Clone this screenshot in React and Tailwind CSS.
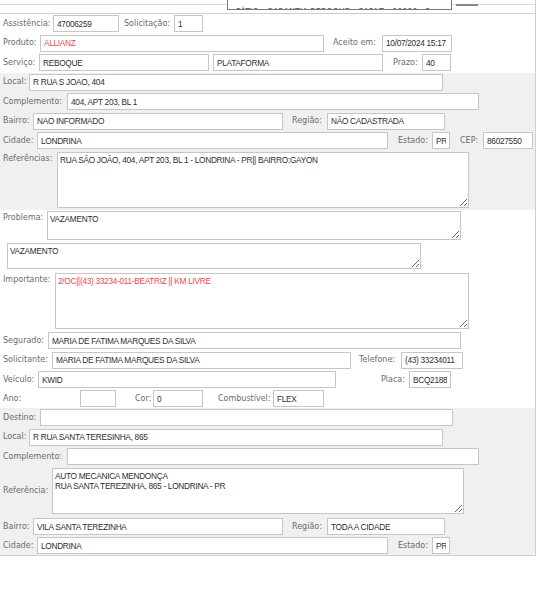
import React from 'react';

const Lbl = ({ children, w = '', cls = '' }) => (
    <span className={`shrink-0 whitespace-nowrap text-[8px] leading-[12px] text-[#6b6b6b] font-['DejaVu_Sans',sans-serif] ${w} ${cls}`}>
        {children}
    </span>
);

const Inp = ({ value = '', w = '', red, cls = '' }) => (
    <input
        readOnly
        value={value}
        className={`shrink-0 h-[17px] border border-[#c6c6c6] bg-white px-[3px] text-[8.3px] tracking-[-0.3px] font-['Liberation_Sans',sans-serif] outline-none ${red ? 'text-[#f2464e]' : 'text-[#2e2e36]'} ${w} ${cls}`}
    />
);

const Area = ({ value = '', w = '', h = '', red, cls = '' }) => (
    <textarea
        readOnly
        value={value}
        className={`shrink-0 border border-[#c6c6c6] bg-white px-[2px] py-[2px] text-[8.3px] leading-[10px] tracking-[-0.3px] font-['Liberation_Sans',sans-serif] outline-none overflow-hidden ${red ? 'text-[#f2464e]' : 'text-[#2e2e36]'} ${w} ${h} ${cls}`}
    />
);

const Row = ({ children, h = 'h-[19.5px]' }) => (
    <div className={`flex items-center pl-[3px] ${h}`}>{children}</div>
);

export default function App() {
    return (
        <div className="w-[536px] bg-white border-r border-[#cfcfcf]">
            {/* pedaço do cabeçalho cortado no topo */}
            <div className="flex items-start h-[13px] overflow-hidden">
                <div className="w-[227px] h-[1px] mt-[4px] bg-[#dcdcdc]" />
                <div className="w-[225px] h-[20px] mt-[-10px] border border-[#7a7a7a] bg-white flex items-end px-[8px] text-[8px] leading-[10px] text-[#555] font-['DejaVu_Sans',sans-serif] overflow-hidden">
                    <span className="mb-[-9px] whitespace-nowrap">PÁTIO - GARANTIA REBOQUE - CAPAZ - 00089 - 2ª ▾</span>
                </div>
                <div className="w-[4px] h-[1px] mt-[4px] bg-[#dcdcdc]" />
                <div className="w-[22px] h-[2px] mt-[4px] bg-[#8a8a8a]" />
                <div className="flex-1 h-[1px] mt-[4px] bg-[#dcdcdc]" />
            </div>

            <div className="border-t border-b border-[#cfcfcf]">
                {/* dados do serviço */}
                <div className="bg-white">
                    <Row>
                        <Lbl w="w-[50px]">Assistência:</Lbl>
                        <Inp w="w-[66px]" value="47006259" />
                        <Lbl w="w-[50px]" cls="ml-[5px]">Solicitação:</Lbl>
                        <Inp w="w-[29px]" value="1" />
                    </Row>
                    <Row>
                        <Lbl w="w-[37px]">Produto:</Lbl>
                        <Inp w="w-[284px]" value="ALLIANZ" red />
                        <Lbl w="w-[49px]" cls="ml-[9px]">Aceito em:</Lbl>
                        <Inp w="w-[70px]" value="10/07/2024 15:17" />
                    </Row>
                    <Row>
                        <Lbl w="w-[36px]">Serviço:</Lbl>
                        <Inp w="w-[170px]" value="REBOQUE" />
                        <Inp w="w-[170px]" value="PLATAFORMA" cls="ml-[4px]" />
                        <Lbl w="w-[29px]" cls="ml-[10px]">Prazo:</Lbl>
                        <Inp w="w-[29px]" value="40" />
                    </Row>
                </div>

                {/* endereço de origem */}
                <div className="bg-[#f0f0f0]">
                    <Row>
                        <Lbl w="w-[26px]">Local:</Lbl>
                        <Inp w="w-[414px]" value="R RUA S JOAO, 404" />
                    </Row>
                    <Row>
                        <Lbl w="w-[64px]">Complemento:</Lbl>
                        <Inp w="w-[412px]" value="404, APT 203, BL 1" />
                    </Row>
                    <Row>
                        <Lbl w="w-[30px]">Bairro:</Lbl>
                        <Inp w="w-[250px]" value="NAO INFORMADO" />
                        <Lbl w="w-[35px]" cls="ml-[9px]">Região:</Lbl>
                        <Inp w="w-[118px]" value="NÃO CADASTRADA" />
                    </Row>
                    <Row>
                        <Lbl w="w-[34px]">Cidade:</Lbl>
                        <Inp w="w-[351px]" value="LONDRINA" />
                        <Lbl w="w-[34px]" cls="ml-[10px]">Estado:</Lbl>
                        <Inp w="w-[18px]" value="PR" cls="px-[2px]" />
                        <Lbl w="w-[23px]" cls="ml-[10px]">CEP:</Lbl>
                        <Inp w="w-[50px]" value="86027550" />
                    </Row>
                    <div className="flex items-start pl-[3px] pt-[1.5px] pb-[1.5px]">
                        <Lbl w="w-[54px]" cls="pt-[1px]">Referências:</Lbl>
                        <Area w="w-[412px]" h="h-[56px]" value="RUA SÃO JOÃO, 404, APT 203, BL 1 - LONDRINA - PR|| BAIRRO:GAYON" />
                    </div>
                </div>

                {/* problema e contato */}
                <div className="bg-white">
                    <div className="flex items-start pl-[3px] pt-[1.5px]">
                        <Lbl w="w-[44px]" cls="pt-[1px]">Problema:</Lbl>
                        <Area w="w-[414px]" h="h-[29px]" value="VAZAMENTO" />
                    </div>
                    <div className="flex pl-[7px] pt-[3px]">
                        <Area w="w-[414px]" h="h-[26px]" value="VAZAMENTO" />
                    </div>
                    <div className="flex items-start pl-[3px] pt-[4px] pb-[1.75px]">
                        <Lbl w="w-[52px]" cls="pt-[1px]">Importante:</Lbl>
                        <Area w="w-[414px]" h="h-[56px]" value="2/OC||(43) 33234-011-BEATRIZ || KM LIVRE" red />
                    </div>
                    <Row>
                        <Lbl w="w-[45px]">Segurado:</Lbl>
                        <Inp w="w-[413px]" value="MARIA DE FATIMA MARQUES DA SILVA" />
                    </Row>
                    <Row>
                        <Lbl w="w-[49px]">Solicitante:</Lbl>
                        <Inp w="w-[299px]" value="MARIA DE FATIMA MARQUES DA SILVA" />
                        <Lbl w="w-[42px]" cls="ml-[8px]">Telefone:</Lbl>
                        <Inp w="w-[62px]" value="(43) 33234011" />
                    </Row>
                    <Row>
                        <Lbl w="w-[35px]">Veículo:</Lbl>
                        <Inp w="w-[298px]" value="KWID" />
                        <Lbl w="w-[28px]" cls="ml-[45px]">Placa:</Lbl>
                        <Inp w="w-[42px]" value="BCQ2188" />
                    </Row>
                    <Row h="h-[18.5px]">
                        <Lbl w="w-[77px]">Ano:</Lbl>
                        <Inp w="w-[36px]" value="" />
                        <Lbl w="w-[18px]" cls="ml-[19px]">Cor:</Lbl>
                        <Inp w="w-[50px]" value="0" />
                        <Lbl w="w-[55px]" cls="ml-[15px]">Combustível:</Lbl>
                        <Inp w="w-[51px]" value="FLEX" />
                    </Row>
                </div>

                {/* destino */}
                <div className="bg-[#f0f0f0]">
                    <Row>
                        <Lbl w="w-[37px]">Destino:</Lbl>
                        <Inp w="w-[413px]" value="" />
                    </Row>
                    <Row>
                        <Lbl w="w-[26px]">Local:</Lbl>
                        <Inp w="w-[414px]" value="R RUA SANTA TERESINHA, 865" />
                    </Row>
                    <Row>
                        <Lbl w="w-[64px]">Complemento:</Lbl>
                        <Inp w="w-[412px]" value="" />
                    </Row>
                    <div className="flex items-center pl-[3px] pt-[1.75px] pb-[3px]">
                        <Lbl w="w-[49px]">Referência:</Lbl>
                        <Area w="w-[412px]" h="h-[46px]" value={'AUTO MECANICA MENDONÇA\nRUA SANTA TEREZINHA, 865 - LONDRINA - PR'} />
                    </div>
                    <Row>
                        <Lbl w="w-[30px]">Bairro:</Lbl>
                        <Inp w="w-[250px]" value="VILA SANTA TEREZINHA" />
                        <Lbl w="w-[35px]" cls="ml-[9px]">Região:</Lbl>
                        <Inp w="w-[118px]" value="TODA A CIDADE" />
                    </Row>
                    <Row h="h-[18px]">
                        <Lbl w="w-[34px]">Cidade:</Lbl>
                        <Inp w="w-[351px]" value="LONDRINA" />
                        <Lbl w="w-[34px]" cls="ml-[10px]">Estado:</Lbl>
                        <Inp w="w-[18px]" value="PR" cls="px-[2px]" />
                    </Row>
                </div>
            </div>
        </div>
    );
}
